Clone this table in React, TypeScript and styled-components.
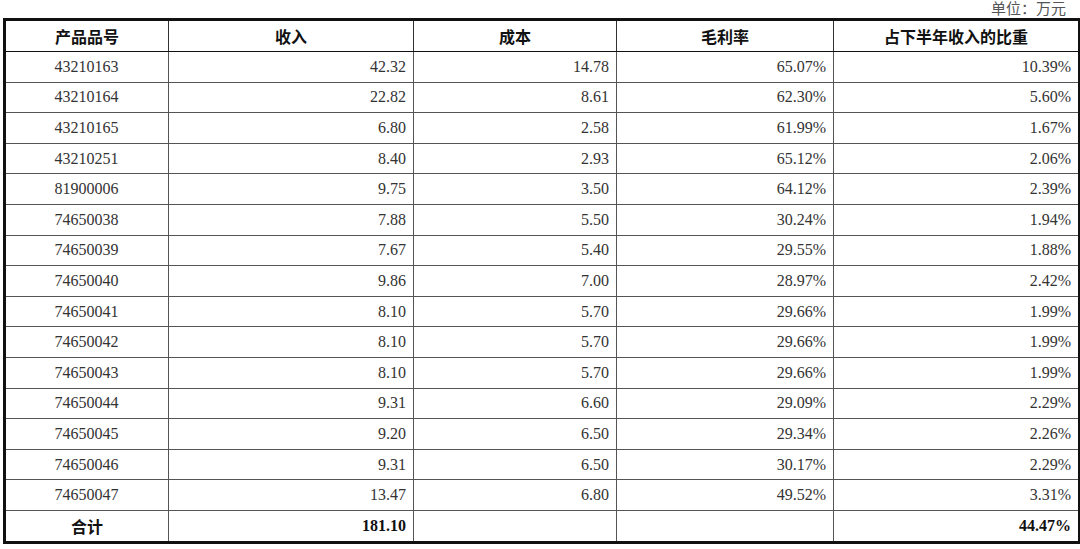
import React from 'react';
import styled, { createGlobalStyle } from 'styled-components';

const GlobalStyle = createGlobalStyle`
  html, body {
    margin: 0;
    padding: 0;
    background: #fff;
  }
`;

const serif = `'Liberation Serif', 'Noto Sans CJK SC', serif`;
const heavy = `'Noto Sans CJK SC', sans-serif`;

const Page = styled.div`
  width: 1080px;
  height: 549px;
  padding: 0 2px 0 3px;
  box-sizing: border-box;
  font-family: ${serif};
`;

const Unit = styled.div`
  height: 18px;
  line-height: 18px;
  text-align: right;
  padding-right: 12px;
  font-size: 15px;
  color: #555;
  font-family: ${serif};
`;

const Table = styled.table`
  width: 1075px;
  border-collapse: collapse;
  table-layout: fixed;
  border: 3px solid #111;
  font-family: ${serif};
`;

const HeadCell = styled.th`
  height: 30px;
  padding: 0;
  border: 1px solid #333;
  border-bottom-color: #111;
  font-family: ${heavy};
  font-weight: 700;
  font-size: 16px;
  color: #111;
  text-align: center;
`;

const Cell = styled.td<{ $align?: 'left' | 'center' | 'right'; $bold?: boolean }>`
  height: 29.6px;
  padding: 0 7px 0 6px;
  border: 1px solid #555;
  font-family: ${serif};
  font-size: 16px;
  color: ${(p) => (p.$bold ? '#111' : '#333')};
  font-weight: ${(p) => (p.$bold ? 700 : 400)};
  text-align: ${(p) => p.$align || 'right'};
  white-space: nowrap;
`;

const TotalLabel = styled.td`
  height: 30px;
  padding: 0;
  border: 1px solid #555;
  border-top-color: #111;
  font-family: ${heavy};
  font-weight: 700;
  font-size: 16px;
  color: #111;
  text-align: center;
`;

const TotalCell = styled(Cell)`
  height: 30px;
  border-top-color: #111;
`;

const rows = [
  ['43210163', '42.32', '14.78', '65.07%', '10.39%'],
  ['43210164', '22.82', '8.61', '62.30%', '5.60%'],
  ['43210165', '6.80', '2.58', '61.99%', '1.67%'],
  ['43210251', '8.40', '2.93', '65.12%', '2.06%'],
  ['81900006', '9.75', '3.50', '64.12%', '2.39%'],
  ['74650038', '7.88', '5.50', '30.24%', '1.94%'],
  ['74650039', '7.67', '5.40', '29.55%', '1.88%'],
  ['74650040', '9.86', '7.00', '28.97%', '2.42%'],
  ['74650041', '8.10', '5.70', '29.66%', '1.99%'],
  ['74650042', '8.10', '5.70', '29.66%', '1.99%'],
  ['74650043', '8.10', '5.70', '29.66%', '1.99%'],
  ['74650044', '9.31', '6.60', '29.09%', '2.29%'],
  ['74650045', '9.20', '6.50', '29.34%', '2.26%'],
  ['74650046', '9.31', '6.50', '30.17%', '2.29%'],
  ['74650047', '13.47', '6.80', '49.52%', '3.31%'],
];

const headers = ['产品品号', '收入', '成本', '毛利率', '占下半年收入的比重'];
const widths = [164, 245, 203, 217, 246];

export default function App() {
  return (
    <Page>
      <GlobalStyle />
      <Unit>单位：万元</Unit>
      <Table>
        <colgroup>
          {widths.map((w, i) => (
            <col key={i} style={{ width: w }} />
          ))}
        </colgroup>
        <thead>
          <tr>
            {headers.map((h) => (
              <HeadCell key={h}>{h}</HeadCell>
            ))}
          </tr>
        </thead>
        <tbody>
          {rows.map((r) => (
            <tr key={r[0]}>
              <Cell $align="center">{r[0]}</Cell>
              <Cell>{r[1]}</Cell>
              <Cell>{r[2]}</Cell>
              <Cell>{r[3]}</Cell>
              <Cell>{r[4]}</Cell>
            </tr>
          ))}
          <tr>
            <TotalLabel>合计</TotalLabel>
            <TotalCell $bold>181.10</TotalCell>
            <TotalCell />
            <TotalCell />
            <TotalCell $bold>44.47%</TotalCell>
          </tr>
        </tbody>
      </Table>
    </Page>
  );
}
